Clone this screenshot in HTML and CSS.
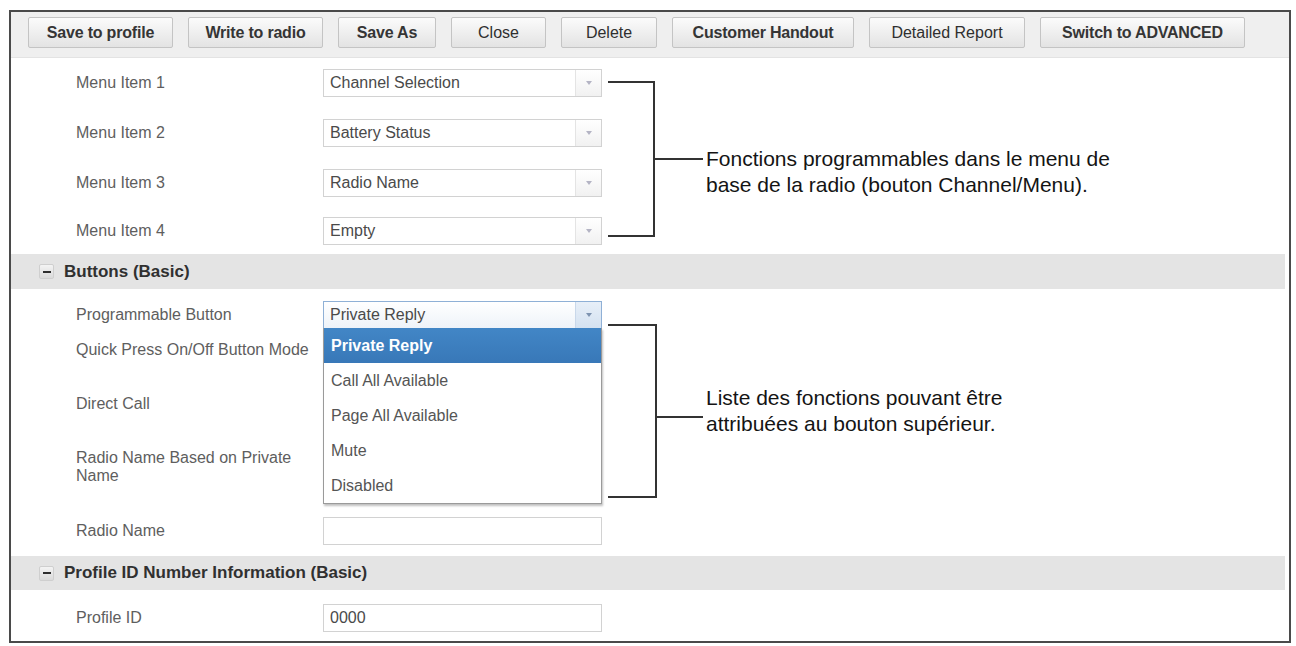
FILE: index.html
```html
<!DOCTYPE html>
<html lang="en">
<head>
<meta charset="utf-8">
<title>Profile editor</title>
<link rel="stylesheet" href="styles.css">
</head>
<body>
<div class="frame">
  <div class="toolbar">
    <button class="btn w-save-profile">Save to profile</button>
    <button class="btn w-write">Write to radio</button>
    <button class="btn w-save-as">Save As</button>
    <button class="btn light w-close">Close</button>
    <button class="btn light w-delete">Delete</button>
    <button class="btn w-handout">Customer Handout</button>
    <button class="btn light w-report">Detailed Report</button>
    <button class="btn w-switch">Switch to ADVANCED</button>
  </div>

  <div class="section menu-section">
    <div class="form-row r50">
      <div class="label">Menu Item 1</div>
      <div class="select"><span class="value">Channel Selection</span><span class="arrow"></span></div>
    </div>
    <div class="form-row r50">
      <div class="label">Menu Item 2</div>
      <div class="select"><span class="value">Battery Status</span><span class="arrow"></span></div>
    </div>
    <div class="form-row r50">
      <div class="label">Menu Item 3</div>
      <div class="select"><span class="value">Radio Name</span><span class="arrow"></span></div>
    </div>
    <div class="form-row r46">
      <div class="label">Menu Item 4</div>
      <div class="select"><span class="value">Empty</span><span class="arrow"></span></div>
    </div>
  </div>

  <div class="band band-buttons">
    <span class="toggle"><span class="dash"></span></span>
    <span class="band-title">Buttons (Basic)</span>
  </div>

  <div class="section buttons-section">
    <div class="form-row row-a">
      <div class="label">Programmable Button</div>
      <div class="select focused"><span class="value">Private Reply</span><span class="arrow"></span>
        <ul class="dropdown">
          <li class="opt selected">Private Reply</li>
          <li class="opt">Call All Available</li>
          <li class="opt">Page All Available</li>
          <li class="opt">Mute</li>
          <li class="opt">Disabled</li>
        </ul>
      </div>
    </div>
    <div class="form-row row-b">
      <div class="label nowrap">Quick Press On/Off Button Mode</div>
    </div>
    <div class="form-row row-c">
      <div class="label">Direct Call</div>
    </div>
    <div class="form-row row-d">
      <div class="label">Radio Name Based on Private Name</div>
    </div>
    <div class="form-row row-e">
      <div class="label">Radio Name</div>
      <div class="input"></div>
    </div>
  </div>

  <div class="band band-profile">
    <span class="toggle"><span class="dash"></span></span>
    <span class="band-title">Profile ID Number Information (Basic)</span>
  </div>

  <div class="section profile-section">
    <div class="form-row row-id">
      <div class="label">Profile ID</div>
      <div class="input"><span class="value">0000</span></div>
    </div>
  </div>

  <div class="callout callout-menu">
    <div class="bracket"></div>
    <div class="tick"></div>
    <div class="note">Fonctions programmables dans le menu de<br>base de la radio (bouton Channel/Menu).</div>
  </div>

  <div class="callout callout-list">
    <div class="bracket"></div>
    <div class="tick"></div>
    <div class="note">Liste des fonctions pouvant être<br>attribuées au bouton supérieur.</div>
  </div>
</div>
</body>
</html>
```

FILE: styles.css
```css
* { box-sizing: border-box; }

body {
  margin: 0;
  background: #ffffff;
  font-family: "Liberation Sans", Arial, sans-serif;
}

.frame {
  position: relative;
  margin: 10px 0 0 9px;
  width: 1282px;
  height: 633px;
  border: 2px solid #4a4a4a;
  background: #ffffff;
}

/* toolbar */
.toolbar {
  height: 46px;
  background: #efefef;
  border-bottom: 1px solid #e3e3e3;
  display: flex;
  align-items: flex-start;
  gap: 15px;
  padding: 5px 0 0 17px;
}

.btn {
  height: 31px;
  padding: 0;
  border: 1px solid #c4c4c4;
  border-radius: 2px;
  background: linear-gradient(#fbfbfb, #e3e3e3);
  color: #353535;
  font-family: "Liberation Sans", Arial, sans-serif;
  font-weight: bold;
  font-size: 16px;
  line-height: 29px;
  letter-spacing: -0.2px;
  text-align: center;
  white-space: nowrap;
}

.btn.light {
  font-weight: normal;
  color: #2f2f2f;
  letter-spacing: 0;
}

.w-save-profile { width: 145px; }
.w-write { width: 135px; }
.w-save-as { width: 98px; }
.w-close { width: 95px; }
.w-delete { width: 96px; }
.w-handout { width: 182px; }
.w-report { width: 156px; }
.w-switch { width: 205px; }

/* sections */
.section {
  display: flex;
  flex-direction: column;
}

.form-row {
  display: flex;
  align-items: center;
  padding-left: 65px;
}

.r50 { height: 50px; flex: none; }
.r46 { height: 46px; flex: none; }

.label {
  width: 247px;
  flex: none;
  padding-right: 12px;
  color: #5e5e5e;
  font-size: 16px;
  line-height: 18px;
}

.label.nowrap { white-space: nowrap; }

.select,
.input {
  position: relative;
  width: 279px;
  height: 28px;
  flex: none;
  border: 1px solid #d2d2d2;
  background: #ffffff;
  display: flex;
  align-items: center;
  color: #4a4a4a;
  font-size: 16px;
}

.value {
  flex: 1;
  padding-left: 6px;
  white-space: nowrap;
}

.arrow {
  width: 26px;
  height: 100%;
  border-left: 1px solid #e4e4e4;
  background: linear-gradient(#ffffff, #f1f1f1);
  display: flex;
  align-items: center;
  justify-content: center;
}

.arrow::after {
  content: "";
  border-left: 3px solid transparent;
  border-right: 3px solid transparent;
  border-top: 4px solid #b4b4c4;
}

.select.focused {
  border-color: #8fb0d6;
  background: linear-gradient(#ffffff, #eef3f9);
  z-index: 2;
}

.select.focused .arrow {
  background: linear-gradient(#e7eff8, #d4e2f1);
  border-left-color: #c9d8ea;
}

.select.focused .arrow::after { border-top-color: #7d93b0; }

/* dropdown list (open) */
.dropdown {
  position: absolute;
  left: -1px;
  top: 26px;
  width: 279px;
  margin: 0;
  padding: 0;
  list-style: none;
  background: #ffffff;
  border: 1px solid #9a9a9a;
  border-top: none;
  box-shadow: 1px 2px 2px rgba(0, 0, 0, 0.25);
}

.opt {
  height: 35px;
  line-height: 35px;
  padding-left: 7px;
  color: #555555;
  font-size: 16px;
}

.opt.selected {
  background: linear-gradient(#4286c6, #3878b8);
  color: #ffffff;
  font-weight: bold;
}

/* section bands */
.band {
  display: flex;
  align-items: center;
  margin-right: 4px;
  background: #e4e4e4;
  padding-left: 28px;
}

.band-buttons { height: 35px; }
.band-profile { height: 34px; }

.toggle {
  width: 15px;
  height: 15px;
  border: 1px solid #cfcfcf;
  border-radius: 2px;
  background: linear-gradient(#f4f4f4, #dadada);
  display: flex;
  align-items: center;
  justify-content: center;
  margin-right: 10px;
}

.dash {
  width: 8px;
  height: 2px;
  background: #2e2e2e;
}

.band-title {
  font-weight: bold;
  font-size: 17px;
  color: #303030;
}

/* section spacing */
.buttons-section { height: 267px; }
.row-a { margin-top: 12px; height: 28px; }
.row-b { margin-top: 7px; height: 28px; }
.row-c { margin-top: 26px; height: 28px; }
.row-d { margin-top: 31px; height: 36px; }
.row-e { margin-top: 32px; height: 28px; }

.row-id { margin-top: 14px; height: 28px; }

/* callouts */
.callout {
  position: absolute;
  display: flex;
  align-items: center;
}

.bracket {
  border: 2px solid #333333;
  border-left: none;
}

.tick {
  height: 2px;
  background: #333333;
}

.note {
  margin-left: 3px;
  color: #141414;
  font-size: 21px;
  line-height: 26px;
  white-space: nowrap;
}

.callout-menu { left: 597px; top: 69px; }
.callout-menu .bracket { width: 47px; height: 156px; }
.callout-menu .tick { width: 48px; }
.callout-menu .note { margin-top: 26px; }

.callout-list { left: 597px; top: 312px; }
.callout-list .bracket { width: 49px; height: 174px; }
.callout-list .tick { width: 46px; margin-top: 12px; }
```
